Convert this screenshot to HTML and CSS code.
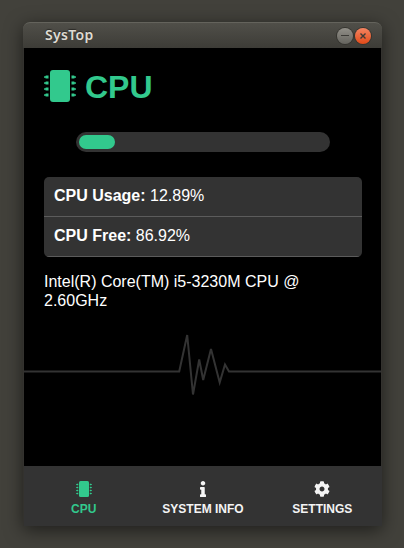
FILE: index.html
```
<!DOCTYPE html>
<html lang="en">
<head>
<meta charset="utf-8">
<title>SysTop</title>
<link rel="stylesheet" href="styles.css">
</head>
<body>
<svg class="defs" aria-hidden="true">
  <symbol id="chip" viewBox="0 0 512 512">
    <rect x="96" y="0" width="320" height="512" rx="48"/>
    <g id="pins">
      <path id="pin" d="M512 106v12a6 6 0 0 1-6 6h-18v6a6 6 0 0 1-6 6h-42V88h42a6 6 0 0 1 6 6v6h18a6 6 0 0 1 6 6z"/>
      <use href="#pin" y="96"/>
      <use href="#pin" y="192"/>
      <use href="#pin" y="288"/>
    </g>
    <use href="#pins" transform="matrix(-1 0 0 1 512 0)"/>
  </symbol>
</svg>
<div class="window">
  <header class="titlebar">
    <span class="title">SysTop</span>
    <span class="control minimize"><svg viewBox="0 0 16 16"><path d="M4 7.5h8"/></svg></span>
    <span class="control close"><svg viewBox="0 0 16 16"><path d="M5.5 5.5l5 5m0-5l-5 5"/></svg></span>
  </header>
  <main class="content">
    <h1 class="heading"><svg class="heading-icon"><use href="#chip"/></svg>CPU</h1>
    <div class="progress"><div class="progress-fill"></div></div>
    <ul class="stats">
      <li><strong>CPU Usage:</strong> 12.89%</li>
      <li><strong>CPU Free:</strong> 86.92%</li>
    </ul>
    <p class="model">Intel(R) Core(TM) i5-3230M CPU @ 2.60GHz</p>
    <svg class="pulse" viewBox="0 0 357 70"><path d="M0 41.4H155.2L163.2 5 169 64.5 175.2 29.5 179.2 50 187 19 195.7 52.5 201 34.5 205 41.4H357"/></svg>
  </main>
  <nav class="tabs">
    <a class="tab active"><svg class="tab-icon"><use href="#chip"/></svg>CPU</a>
    <a class="tab"><svg class="tab-icon" viewBox="0 0 192 512"><path d="M20 424.229h20V279.771H20c-11.046 0-20-8.954-20-20V212c0-11.046 8.954-20 20-20h112c11.046 0 20 8.954 20 20v212.229h20c11.046 0 20 8.954 20 20V492c0 11.046-8.954 20-20 20H20c-11.046 0-20-8.954-20-20v-47.771c0-11.046 8.954-20 20-20zM96 0C56.235 0 24 32.235 24 72s32.235 72 72 72 72-32.235 72-72S135.764 0 96 0z"/></svg>SYSTEM INFO</a>
    <a class="tab"><svg class="tab-icon" viewBox="0 0 512 512"><path d="M487.4 315.7l-42.6-24.6c4.3-23.2 4.3-47 0-70.2l42.6-24.6c4.9-2.8 7.1-8.6 5.5-14-11.1-35.6-30-67.8-54.7-94.6-3.8-4.1-10-5.1-14.8-2.3L380.8 110c-17.9-15.4-38.5-27.3-60.8-35.1V25.8c0-5.6-3.9-10.5-9.4-11.7-36.7-8.2-74.3-7.8-109.2 0-5.5 1.2-9.4 6.1-9.4 11.7V75c-22.2 7.9-42.8 19.8-60.8 35.1L88.7 85.5c-4.9-2.8-11-1.9-14.8 2.3-24.7 26.7-43.6 58.9-54.7 94.6-1.7 5.4.6 11.2 5.5 14L67.3 221c-4.3 23.2-4.3 47 0 70.2l-42.6 24.6c-4.9 2.8-7.1 8.6-5.5 14 11.1 35.6 30 67.8 54.7 94.6 3.8 4.1 10 5.1 14.8 2.3l42.6-24.6c17.9 15.4 38.5 27.3 60.8 35.1v49.2c0 5.6 3.9 10.5 9.4 11.7 36.7 8.2 74.3 7.8 109.2 0 5.5-1.2 9.4-6.1 9.4-11.7v-49.2c22.2-7.9 42.8-19.8 60.8-35.1l42.6 24.6c4.9 2.8 11 1.9 14.8-2.3 24.7-26.7 43.6-58.9 54.7-94.6 1.5-5.5-.7-11.3-5.6-14.1zM256 336c-44.1 0-80-35.9-80-80s35.9-80 80-80 80 35.9 80 80-35.9 80-80 80z"/></svg>SETTINGS</a>
  </nav>
</div>
</body>
</html>
```
FILE: styles.css
```
* {
  box-sizing: border-box;
}

body {
  margin: 0;
  padding: 22px 22px 22px 23px;
  height: 548px;
  overflow: hidden;
  background: #42413b;
  color: #fff;
  font: 16px/19px "Liberation Sans", sans-serif;
}

.defs {
  position: absolute;
  width: 0;
  height: 0;
}

.window {
  display: flex;
  flex-direction: column;
  width: 359px;
  height: 504px;
  padding: 0 1px;
  background: #33322e;
  border-radius: 7px 7px 0 0;
  box-shadow: 0 4px 18px rgba(0, 0, 0, 0.55);
}

.titlebar {
  display: flex;
  align-items: center;
  gap: 2px;
  height: 26px;
  margin: 0 -1px;
  padding: 0 11px 0 22px;
  border-top: 1px solid #64635c;
  border-radius: 7px 7px 0 0;
  background: linear-gradient(#504f49, #3d3c37);
}

.title {
  flex: 1;
  padding-bottom: 2px;
  color: #dfdbd2;
  font: 600 14px/22px "Noto Sans", sans-serif;
  letter-spacing: 0.3px;
  text-shadow: 0 -1px 1px #2b2a27;
}

.control {
  width: 16px;
  height: 16px;
  border-radius: 50%;
  box-shadow: 0 0 0 1px #35342f;
}

.control svg {
  display: block;
  fill: none;
  stroke: #3c3b37;
  stroke-width: 1;
}

.minimize {
  background: linear-gradient(#918f88, #65645e);
}

.close {
  background: linear-gradient(#f58562, #e14a18);
}

.close svg {
  stroke-width: 1.4;
}

.content {
  height: 418px;
  padding: 20px 19px 0 20px;
  background: #000;
}

.heading {
  display: flex;
  align-items: flex-start;
  gap: 9px;
  height: 38px;
  margin: 0 0 26px;
  color: #32c98d;
  font-size: 32px;
  line-height: 38px;
}

.heading-icon {
  width: 32px;
  height: 32px;
  margin-top: 2px;
  fill: currentColor;
}

.progress {
  width: 254px;
  height: 20px;
  margin: 0 auto 25px;
  padding: 3px;
  border-radius: 10px;
  background: #333;
}

.progress-fill {
  width: 36px;
  height: 14px;
  border-radius: 7px;
  background: #32c98d;
}

.stats {
  margin: 0 0 15px;
  padding: 0;
  overflow: hidden;
  border-radius: 5px;
  background: #333;
  list-style: none;
}

.stats li {
  height: 40px;
  padding: 9px 10px 11px;
  border-bottom: 1px solid #5c5c5c;
}

.model {
  margin: 0 0 20px;
}

.pulse {
  display: block;
  width: 357px;
  height: 70px;
  margin-left: -20px;
  fill: none;
  stroke: #333;
  stroke-width: 2;
}

.tabs {
  display: grid;
  grid-template-columns: repeat(3, 1fr);
  height: 60px;
  margin: 0 -1px 0 0;
  background: #333;
}

.tab {
  display: flex;
  flex-direction: column;
  align-items: center;
  padding-top: 15px;
  color: #f4f4f4;
  font-size: 12px;
  font-weight: bold;
  line-height: 14px;
  white-space: nowrap;
}

.tab-icon {
  width: 16px;
  height: 16px;
  margin-bottom: 5px;
  fill: currentColor;
}

.active {
  color: #32c98d;
}
```
